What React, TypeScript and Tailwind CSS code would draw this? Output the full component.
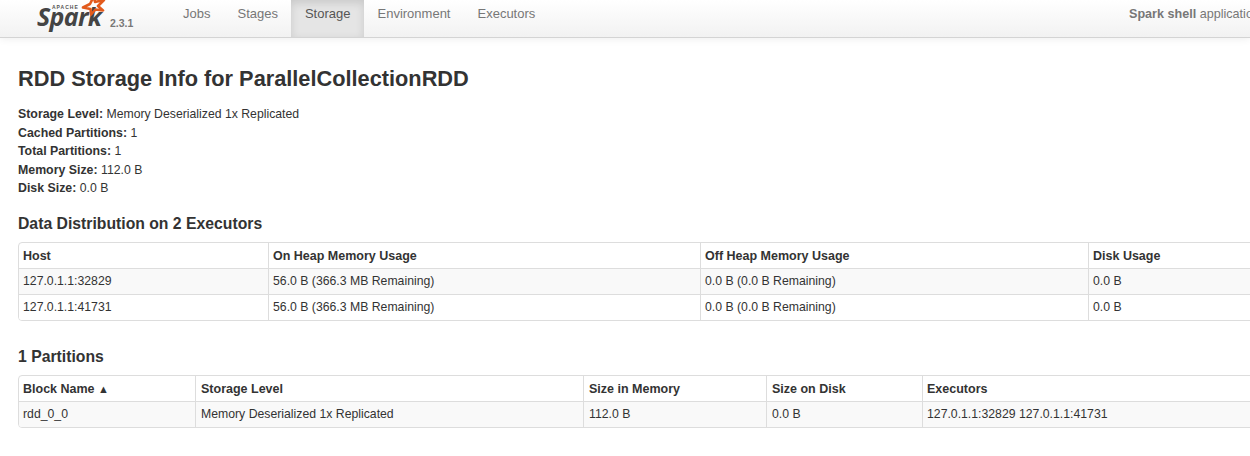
import type { ReactNode } from 'react'

const navItems = ['Jobs', 'Stages', 'Storage', 'Environment', 'Executors']

const summary = [
  { label: 'Storage Level:', value: 'Memory Deserialized 1x Replicated' },
  { label: 'Cached Partitions:', value: '1' },
  { label: 'Total Partitions:', value: '1' },
  { label: 'Memory Size:', value: '112.0 B' },
  { label: 'Disk Size:', value: '0.0 B' },
]

interface DataTableProps {
  widths: number[]
  headers: ReactNode[]
  rows: string[][]
  wideInset?: boolean
}

function DataTable({ widths, headers, rows, wideInset }: DataTableProps) {
  // middle columns of the second table sit a pixel further in
  const pad = (i: number) => (wideInset && i > 0 && i < 4 ? 'pl-[5px] pr-1' : 'px-1')

  return (
    <div className="w-[1300px] overflow-hidden rounded-[4px] border border-[#dddddd]">
      <table className="w-full table-fixed border-separate border-spacing-0 text-[12.25px] leading-[18px] text-[#333333]">
        <colgroup>
          {widths.map((w, i) => (
            <col key={i} style={{ width: w }} />
          ))}
        </colgroup>
        <thead>
          <tr>
            {headers.map((h, i) => (
              <th key={i} className={`h-[25px] text-left align-middle text-[12.5px] font-bold ${pad(i)} ${i > 0 ? 'border-l border-[#dddddd]' : ''}`}>
                {h}
              </th>
            ))}
          </tr>
        </thead>
        <tbody>
          {rows.map((row, r) => (
            <tr key={r} className={r % 2 === 0 ? 'bg-[#f9f9f9]' : 'bg-white'}>
              {row.map((cell, i) => (
                <td key={i} className={`h-[26px] border-t border-[#dddddd] pb-[2px] align-middle ${pad(i)} ${i > 0 ? 'border-l' : ''}`}>
                  {cell}
                </td>
              ))}
            </tr>
          ))}
        </tbody>
      </table>
    </div>
  )
}

function SparkLogo() {
  return (
    <div className="relative h-[38px] w-[70px] shrink-0 overflow-hidden">
      <span className="absolute left-[15px] top-[4px] text-[5px] font-bold leading-[6px] tracking-[1px] text-[#555555]">APACHE</span>
      <span className="absolute left-0 top-[-1px] text-[25px] font-bold italic leading-[34px] tracking-[-0.7px] text-[#444444] [font-family:'Open_Sans',sans-serif]">
        Spark
      </span>
      <svg className="absolute left-[43px] top-[-5px]" width="26" height="22" viewBox="0 0 26 22" fill="none">
        <path d="M14 1 L15 7 L24 5 L18 11 L23 15.5 L15.5 14.5 L11 19.5 L10.5 14 L3 12.5 L10 9 Z" stroke="#e25a1c" strokeWidth="2.6" strokeLinejoin="round" />
      </svg>
    </div>
  )
}

export default function App() {
  return (
    <div className="h-[456px] w-[1250px] overflow-hidden bg-white text-[12.25px] leading-[18.4px] text-[#333333] [font-family:'Liberation_Sans',Arial,sans-serif]">
      <nav className="flex h-[38px] items-stretch border-b border-[#d4d4d4] bg-gradient-to-b from-white to-[#f2f2f2] shadow-[0_1px_8px_rgba(0,0,0,0.07)]">
        <div className="ml-[37px] flex w-[132.5px] shrink-0 items-start">
          <SparkLogo />
          <span className="ml-[3px] mt-[17px] text-[10.5px] font-bold leading-[12px] text-[#777777]">2.3.1</span>
        </div>
        <ul className="flex">
          {navItems.map((item) => (
            <li
              key={item}
              className={`flex items-center px-[13.5px] pb-[8px] text-[13px] ${item === 'Storage' ? 'bg-[#e5e5e5] text-[#555555] shadow-[inset_0_3px_8px_rgba(0,0,0,0.125)]' : 'text-[#777777]'}`}
            >
              {item}
            </li>
          ))}
        </ul>
        <div className="ml-auto flex items-center whitespace-nowrap pb-[8px] text-[#777777]">
          <div className="w-[121px] overflow-hidden text-[12.6px]">
            <strong className="font-bold">Spark shell</strong> application UI
          </div>
        </div>
      </nav>
      <main className="pl-[18px]">
        <h3 className="mt-[26px] text-[21.75px] font-bold leading-[30px]">RDD Storage Info for ParallelCollectionRDD</h3>
        <ul className="mt-[11.3px]">
          {summary.map((s) => (
            <li key={s.label}>
              <strong className="text-[12.35px] font-bold">{s.label}</strong> {s.value}
            </li>
          ))}
        </ul>
        <h4 className="mt-[16.7px] text-[15.75px] font-bold leading-[20px]">Data Distribution on 2 Executors</h4>
        <div className="mt-[8px]">
          <DataTable
            widths={[249, 432, 388, 231]}
            headers={['Host', 'On Heap Memory Usage', 'Off Heap Memory Usage', 'Disk Usage']}
            rows={[
              ['127.0.1.1:32829', '56.0 B (366.3 MB Remaining)', '0.0 B (0.0 B Remaining)', '0.0 B'],
              ['127.0.1.1:41731', '56.0 B (366.3 MB Remaining)', '0.0 B (0.0 B Remaining)', '0.0 B'],
            ]}
          />
        </div>
        <h4 className="mt-[26px] text-[15.75px] font-bold leading-[20px]">1 Partitions</h4>
        <div className="mt-[8px]">
          <DataTable
            wideInset
            widths={[176, 388, 183, 156, 397]}
            headers={[
              <>Block Name <span className="text-[11px] leading-none">▲</span></>,
              'Storage Level',
              'Size in Memory',
              'Size on Disk',
              'Executors',
            ]}
            rows={[['rdd_0_0', 'Memory Deserialized 1x Replicated', '112.0 B', '0.0 B', '127.0.1.1:32829 127.0.1.1:41731']]}
          />
        </div>
      </main>
    </div>
  )
}
